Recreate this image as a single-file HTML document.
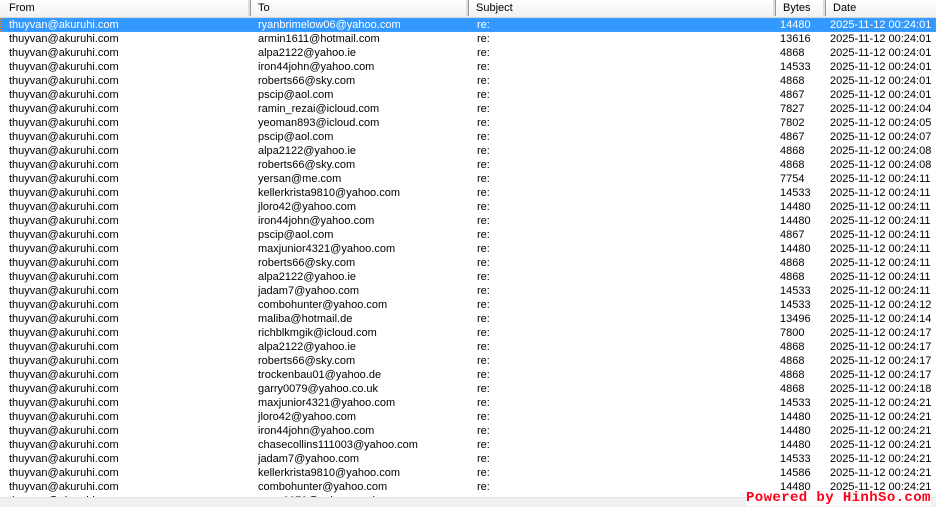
<!DOCTYPE html>
<html><head><style>
body{margin:0;width:936px;height:506px;overflow:hidden;background:#fff;font-family:"Liberation Sans",sans-serif;font-size:11px;position:relative}
.h{position:absolute;top:0;left:0;width:936px;height:17px;background:linear-gradient(#fff,#f1f1f1);border-bottom:1px solid #d5d5d5}
.h div{position:absolute;top:0;height:16px;line-height:17px;padding-left:7px;box-sizing:border-box;border-right:1px solid #999;box-shadow:inset -2px 0 0 #ddd}
.r{position:absolute;left:0;width:936px;height:14px;line-height:15px;white-space:nowrap}
.r span{position:absolute;top:0}
.sel{background:#3399ff;color:#fff;outline:1px dotted #e08020;outline-offset:-1px}
.bar{position:absolute;left:0;top:497px;width:936px;height:9px;background:#f0f0f0;border-top:1px solid #e2e2e2}
.wm{position:absolute;left:746px;top:490px;white-space:nowrap;color:#ff0018;font-family:"Liberation Mono",monospace;font-weight:bold;font-size:14px;letter-spacing:0.4px;background:rgba(255,255,255,0.8)}
</style></head><body>
<div class="h">
<div style="left:2px;width:249px">From</div>
<div style="left:251px;width:218px">To</div>
<div style="left:469px;width:307px">Subject</div>
<div style="left:776px;width:50px">Bytes</div>
<div style="left:826px;width:110px;border-right:none;box-shadow:none">Date</div>
</div>
<div id="rows"></div>
<script>
var d=[["ryanbrimelow06@yahoo.com",14480,"00:24:01"],["armin1611@hotmail.com",13616,"00:24:01"],["alpa2122@yahoo.ie",4868,"00:24:01"],["iron44john@yahoo.com",14533,"00:24:01"],["roberts66@sky.com",4868,"00:24:01"],["pscip@aol.com",4867,"00:24:01"],["ramin_rezai@icloud.com",7827,"00:24:04"],["yeoman893@icloud.com",7802,"00:24:05"],["pscip@aol.com",4867,"00:24:07"],["alpa2122@yahoo.ie",4868,"00:24:08"],["roberts66@sky.com",4868,"00:24:08"],["yersan@me.com",7754,"00:24:11"],["kellerkrista9810@yahoo.com",14533,"00:24:11"],["jloro42@yahoo.com",14480,"00:24:11"],["iron44john@yahoo.com",14480,"00:24:11"],["pscip@aol.com",4867,"00:24:11"],["maxjunior4321@yahoo.com",14480,"00:24:11"],["roberts66@sky.com",4868,"00:24:11"],["alpa2122@yahoo.ie",4868,"00:24:11"],["jadam7@yahoo.com",14533,"00:24:11"],["combohunter@yahoo.com",14533,"00:24:12"],["maliba@hotmail.de",13496,"00:24:14"],["richblkmgik@icloud.com",7800,"00:24:17"],["alpa2122@yahoo.ie",4868,"00:24:17"],["roberts66@sky.com",4868,"00:24:17"],["trockenbau01@yahoo.de",4868,"00:24:17"],["garry0079@yahoo.co.uk",4868,"00:24:18"],["maxjunior4321@yahoo.com",14533,"00:24:21"],["jloro42@yahoo.com",14480,"00:24:21"],["iron44john@yahoo.com",14480,"00:24:21"],["chasecollins111003@yahoo.com",14480,"00:24:21"],["jadam7@yahoo.com",14533,"00:24:21"],["kellerkrista9810@yahoo.com",14586,"00:24:21"],["combohunter@yahoo.com",14480,"00:24:21"],["garry0079@yahoo.co.uk",4868,"00:24:21"]];
var h="";d.forEach(function(r,i){h+='<div class="r'+(i==0?' sel':'')+'" style="top:'+(18+i*14)+'px"><span style="left:9px">thuyvan@akuruhi.com</span><span style="left:258px">'+r[0]+'</span><span style="left:477px">re:</span><span style="left:780px">'+r[1]+'</span><span style="left:830px">2025-11-12 '+r[2]+'</span></div>';});
document.getElementById("rows").innerHTML=h;
</script>
<div class="bar"></div>
<div class="wm">Powered by HinhSo.com</div>
</body></html>
